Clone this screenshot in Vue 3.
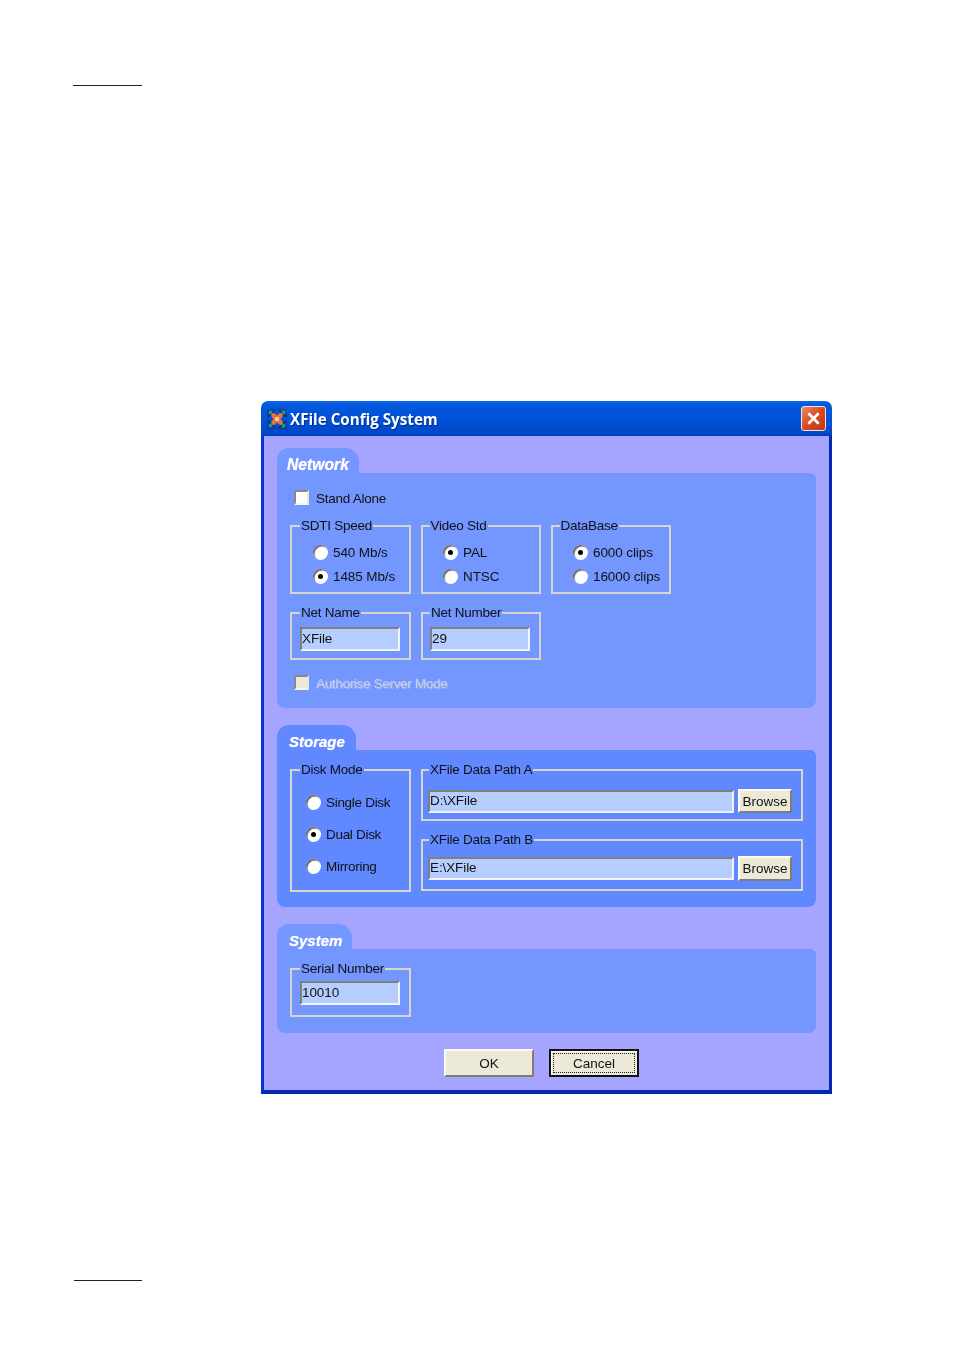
<template>
  <div class="page">
    <div class="rule rule-top"></div>

    <div class="window">
      <header class="titlebar">
        <svg class="app-icon" viewBox="0 0 20 20" width="20" height="20">
          <path d="M1 1h7L5.5 3.5 8 6 6 8 3.500 5.500 1 8zM19 1v7l-2.500-2.500L14 8l-2-2 2.500-2.500L12 1zM19 19h-7l2.500-2.500L12 14l2-2 2.500 2.500L19 12zM1 19v-7l2.500 2.500L6 12l2 2-2.500 2.500L8 19z" fill="#1b93ab" stroke="#0c2f56" stroke-width="1.2" stroke-linejoin="round" />
          <path d="M6.500 6.500l7 7M13.500 6.500l-7 7" stroke="#e8743c" stroke-width="4.600" stroke-linecap="round" />
          <circle cx="10" cy="10" r="2.200" fill="#f8c8a4" />
        </svg>
        <span class="title">XFile Config System</span>
        <button class="close" aria-label="Close">
          <svg viewBox="0 0 13 13" width="15" height="15">
            <path d="M2 2l9 9M11 2l-9 9" stroke="#fff" stroke-width="2.4" />
          </svg>
        </button>
      </header>

      <main class="client">
        <section class="section">
          <div class="tab tab-network">Network</div>
          <div class="panel panel-network">
            <label class="check-row" @click="standAlone = !standAlone">
              <span class="check" :class="{ checked: standAlone }"></span>Stand Alone
            </label>

            <div class="group-grid radios-row">
              <fieldset v-for="group in radioGroups" :key="group.title" class="group radio-group" :class="group.cls">
                <legend>{{ group.title }}</legend>
                <div v-for="opt in group.options" :key="opt" class="radio-row" @click="group.value.value = opt">
                  <span class="radio" :class="{ on: group.value.value === opt }"></span>{{ opt }}
                </div>
              </fieldset>
            </div>

            <div class="group-grid fields-row">
              <fieldset class="group field-group">
                <legend>Net Name</legend>
                <input v-model="netName" class="field" type="text" />
              </fieldset>
              <fieldset class="group field-group narrow">
                <legend>Net Number</legend>
                <input v-model="netNumber" class="field" type="text" />
              </fieldset>
            </div>

            <div class="check-row disabled">
              <span class="check"></span>Authorise Server Mode
            </div>
          </div>
        </section>

        <section class="section">
          <div class="tab tab-storage">Storage</div>
          <div class="panel panel-storage">
            <fieldset class="group disk-group">
              <legend>Disk Mode</legend>
              <div v-for="opt in diskModes" :key="opt" class="radio-row disk-row" @click="diskMode = opt">
                <span class="radio" :class="{ on: diskMode === opt }"></span>{{ opt }}
              </div>
            </fieldset>
            <div class="paths">
              <fieldset class="group path-group path-a">
                <legend>XFile Data Path A</legend>
                <input v-model="pathA" class="field" type="text" />
                <button class="btn browse">Browse</button>
              </fieldset>
              <fieldset class="group path-group path-b">
                <legend>XFile Data Path B</legend>
                <input v-model="pathB" class="field" type="text" />
                <button class="btn browse">Browse</button>
              </fieldset>
            </div>
          </div>
        </section>

        <section class="section">
          <div class="tab tab-system">System</div>
          <div class="panel panel-system">
            <fieldset class="group serial-group">
              <legend>Serial Number</legend>
              <input v-model="serial" class="field" type="text" />
            </fieldset>
          </div>
        </section>

        <footer class="actions">
          <button class="btn action">OK</button>
          <button class="btn action default"><span class="focus">Cancel</span></button>
        </footer>
      </main>
    </div>

    <div class="rule rule-bottom"></div>
  </div>
</template>

<script setup>
import { ref } from 'vue'

const standAlone = ref(false)
const sdti = ref('1485 Mb/s')
const videoStd = ref('PAL')
const database = ref('6000 clips')
const diskMode = ref('Dual Disk')

const netName = ref('XFile')
const netNumber = ref('29')
const pathA = ref('D:\\XFile')
const pathB = ref('E:\\XFile')
const serial = ref('10010')

const diskModes = ['Single Disk', 'Dual Disk', 'Mirroring']

const radioGroups = [
  { title: 'SDTI Speed', cls: 'wide', value: sdti, options: ['540 Mb/s', '1485 Mb/s'] },
  { title: 'Video Std', cls: '', value: videoStd, options: ['PAL', 'NTSC'] },
  { title: 'DataBase', cls: '', value: database, options: ['6000 clips', '16000 clips'] },
]
</script>

<style>
body { background: #fff; }
</style>

<style scoped>
.page { width: 954px; height: 1350px; overflow: hidden; background: #fff; font-family: "Liberation Sans", Arial, sans-serif; font-size: 13.5px; letter-spacing: -0.25px; color: #111; }
.rule { height: 1px; background: #222; width: 69px; margin-left: 73px; }
.rule-top { margin-top: 85px; }
.rule-bottom { margin-top: 186px; margin-left: 74px; width: 68px; }

.window { width: 571px; height: 693px; margin: 315px 0 0 261px; display: flex; flex-direction: column; filter: blur(0.4px); }
.titlebar { height: 35px; flex: none; display: flex; align-items: center; padding: 0 6px 0 6px; border-radius: 7px 7px 0 0; background: linear-gradient(#0a68ea 0, #0257dd 12%, #0052d8 55%, #0048c8 90%, #0040b8 100%); }
.app-icon { flex: none; margin-right: 3px; }
.title { flex: 1; font-family: "Open Sans", sans-serif; font-weight: 700; font-size: 15.2px; letter-spacing: 0; color: #fff; text-shadow: 1px 1px 1px #002a90; }
.close { width: 25px; height: 25px; padding: 0; border: 1px solid #f4e4dc; border-radius: 3px; background: linear-gradient(135deg, #ee8a68, #d64a20 50%, #bb3610); display: flex; align-items: center; justify-content: center; }

.client { flex: 1; display: flex; flex-direction: column; background: #a5a5ff; border: 3px solid #0831d9; border-top: none; border-right-color: #0428b4; border-bottom: 4px solid #0428b4; padding: 12px 13px 13px; }
.section { margin-bottom: 17px; }
.tab { height: 25px; box-sizing: border-box; padding-top: 8px; display: flex; align-items: center; font-weight: 700; font-style: italic; font-size: 15px; letter-spacing: 0; color: #fff; border-radius: 12px 14px 0 0; text-shadow: 0 0 1px #dfe6ff; }
.tab-network { width: 82px; padding-left: 10px; background: #7396ff; font-size: 15.7px; }
.tab-storage { width: 79px; padding-left: 12px; background: #6088ff; }
.tab-system { width: 75px; padding-left: 12px; background: #7396ff; }
.panel { border-radius: 0 6px 8px 8px; padding-left: 13px; padding-right: 13px; box-sizing: border-box; }
.panel-network { background: #7396ff; height: 235px; padding-top: 16px; }
.panel-storage { background: #6088ff; height: 157px; padding-top: 12px; display: flex; gap: 10px; }
.panel-system { background: #7396ff; height: 84px; padding-top: 12px; }

.check-row { display: flex; align-items: center; height: 18px; padding-left: 4px; gap: 7px; }
.check { width: 15px; height: 15px; margin-top: -1px; box-sizing: border-box; background: #fff; border: 2px solid; border-color: #8a8a84 #e8e8e0 #f4f4ee #8a8a84; flex: none; }
.checked { background: #fff radial-gradient(circle, #111 35%, #fff 40%); }
.disabled { color: #c9d0e4; text-shadow: 1px 1px 0 #9fb6f0; letter-spacing: -0.32px; margin-top: 14px; }
.disabled .check { background: #ece9d8; }

/* the legend starts after the fieldset padding, so it is pulled back by --pad */
.group { --pad: 0px; --legend: 8px; margin: 0; min-width: 0; box-sizing: border-box; border: 2px solid #d6d6ce; padding: 0 0 0 var(--pad); }
legend { padding: 0 1px; margin-left: calc(var(--legend) - var(--pad)); height: 16px; line-height: 16px; white-space: nowrap; }

.group-grid { display: grid; grid-template-columns: 121px 120px 120px; gap: 10px; }
.radios-row { margin-top: 11px; }
.fields-row { margin-top: 11px; }
.radio-group { --pad: 20px; --legend: 6.5px; height: 76px; padding-top: 6px; }
.radio-group.wide { --pad: 21px; --legend: 8px; }
.radio-row { display: flex; align-items: center; height: 24px; gap: 5px; white-space: nowrap; letter-spacing: -0.1px; }
.radio { width: 15px; height: 15px; flex: none; box-sizing: border-box; border-radius: 50%; background: #fff; box-shadow: inset 1.5px 1.5px 1px #666; display: flex; align-items: center; justify-content: center; }
.radio.on::after { content: ""; width: 5px; height: 5px; border-radius: 50%; background: #000; }

.field-group { --pad: 8px; height: 55px; padding-top: 6px; padding-right: 9px; }
.field-group.narrow { --pad: 7px; --legend: 7px; }
.field { display: block; width: 100%; height: 24px; box-sizing: border-box; margin: 0; padding: 0 0 2px; outline: none; background: #b5ceff; border: 2px solid; border-color: #808078 #f2f4f8 #f2f4f8 #808078; font: inherit; letter-spacing: -0.1px; color: #111; }

.disk-group { --pad: 14px; width: 121px; flex: none; height: 130px; padding-top: 8px; }
.disk-row { height: 32px; letter-spacing: -0.3px; }
.paths { flex: 1; display: flex; flex-direction: column; gap: 11px; width: 382px; }
.path-group { --pad: 5px; --legend: 6px; height: 59px; display: flex; align-items: flex-start; gap: 4px; padding-top: 11px; padding-right: 9px; }
.path-b { padding-top: 8px; }
.path-group .field { flex: 1; width: auto; min-width: 0; height: 23px; margin-top: 1px; }
.btn { background: #ece9d8; border: 2px solid; border-color: #fbfaf4 #7f7d74 #7f7d74 #fbfaf4; font: inherit; color: #111; padding: 0; }
.browse { width: 54px; height: 24px; flex: none; }
.path-b .browse { height: 25px; }

.serial-group { --pad: 8px; width: 121px; height: 56px; padding-top: 4px; padding-right: 9px; }

.actions { display: flex; gap: 15px; margin-top: -1px; padding-left: 167px; }
.action { width: 90px; height: 28px; }
.default { border: 2px solid #111; padding: 2px; box-shadow: inset 1px 1px 0 #fbfaf4; }
.focus { display: flex; align-items: center; justify-content: center; height: 100%; box-sizing: border-box; border: 1px dotted #222; }
</style>
